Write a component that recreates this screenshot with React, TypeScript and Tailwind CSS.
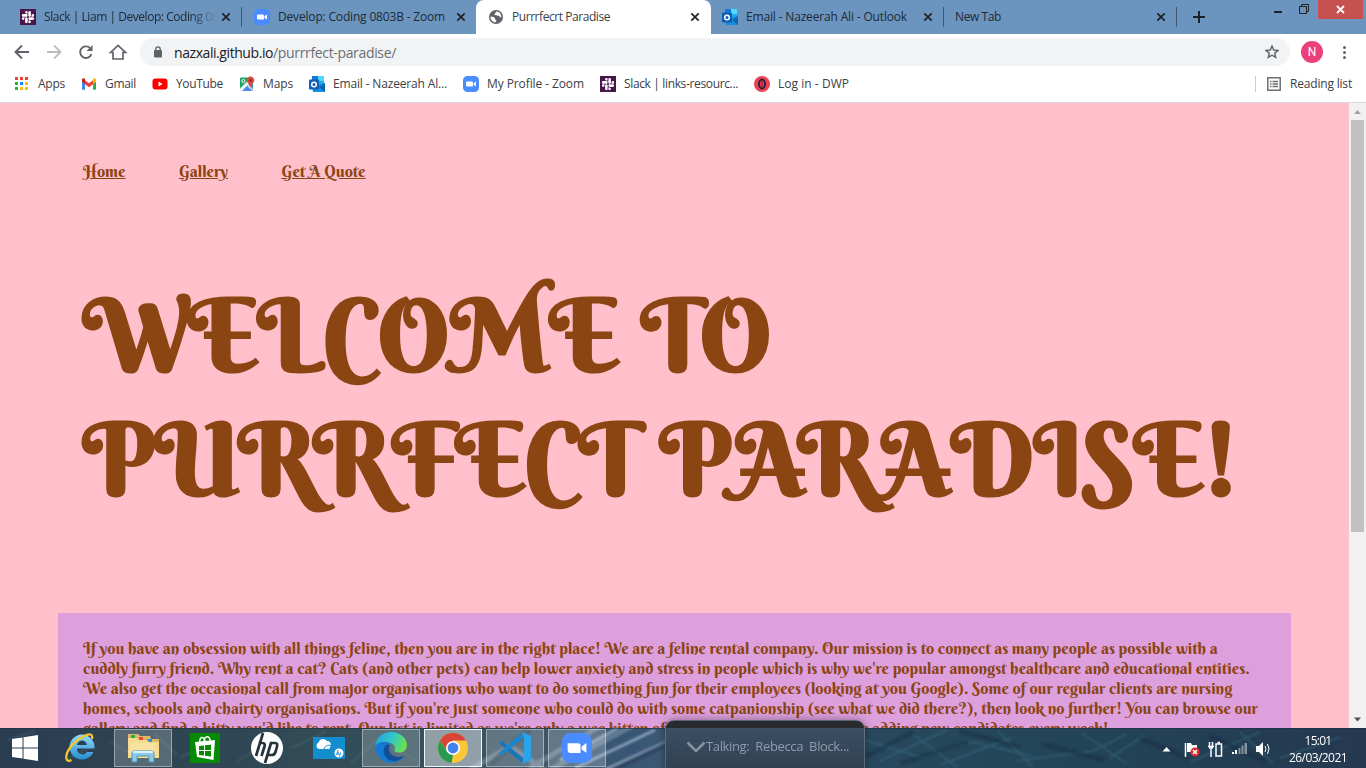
import { useLayoutEffect, useRef } from "react";
import type { ReactNode } from "react";
import { FaSlack } from "react-icons/fa";

/* Text tracked to an exact measure. */
function Fit({ w, children, className = "" }: { w: number; children: string; className?: string }) {
  const ref = useRef<HTMLSpanElement>(null);
  useLayoutEffect(() => {
    const el = ref.current;
    if (!el) return;
    el.style.letterSpacing = "0px";
    const natural = el.getBoundingClientRect().width;
    el.style.letterSpacing = `${(w - natural) / children.length}px`;
  }, [w, children]);
  return (
    <span className={`block shrink-0 whitespace-pre ${className}`} style={{ width: w }}>
      <span ref={ref} className="inline-block">{children}</span>
    </span>
  );
}

const Slack = () => (
  <div className="flex size-4 shrink-0 items-center justify-center bg-[#4a154b] text-white"><FaSlack size={14} /></div>
);
const Zoom = ({ size = 16 }: { size?: number }) => (
  <svg width={size} height={size} viewBox="0 0 16 16" className="shrink-0">
    <rect width="16" height="16" rx="4.500" fill="#4a8cff" />
    <path d="M3 5.400h5.600q1.300 0 1.300 1.300v3.900H4.300Q3 10.600 3 9.300ZM10.500 7.200l2.500-1.800v5.200l-2.500-1.800Z" fill="#fff" />
  </svg>
);
const Outlook = () => (
  <svg width="16" height="16" viewBox="0 0 16 16" className="shrink-0">
    <path d="M3 0h7v6H3z" fill="#0f78d4" />
    <path d="M9 0h6v5H9z" fill="#50d9ff" />
    <path d="M3 5h7v5H3z" fill="#0364b8" />
    <path d="M9 5h6v4H9z" fill="#28a8ea" />
    <path d="M3 10l13-3v9H4z" fill="#1490df" />
    <path d="M16 7v9l-6-5z" fill="#1066b5" />
    <rect y="3.500" width="10" height="10" rx="1" fill="#0f5fb5" />
    <circle cx="5" cy="8.500" r="2.300" fill="none" stroke="#fff" strokeWidth="1.500" />
  </svg>
);
const Globe = () => (
  <svg width="14" height="14" viewBox="0 0 14 14" className="shrink-0">
    <circle cx="7" cy="7" r="7" fill="#5f6368" />
    <path d="M7.500 1.500c-1 .4-.4 1.500-1.500 2s-.5 1.800.8 1.700 1.700.7 2.700.5S11 8 12.300 7.300C12.500 3.800 10 1.600 7.500 1.500ZM1.500 6.500c2 .2 4.300.4 4.500 2.200s1.500.8 1.400 2.100c0 .8-1 .8-1.200 1.600C3.500 12 1.400 9.500 1.500 6.500Z" fill="#fff" />
  </svg>
);
const Cross = () => (
  <svg width="10" height="10" viewBox="0 0 10 10" className="shrink-0">
    <path d="M1.300 1.300l7.400 7.400M8.700 1.300L1.300 8.700" stroke="#202124" strokeWidth="1.700" />
  </svg>
);

function Tab({ icon, label, w, sep, fade }: { icon?: ReactNode; label: string; w: number; sep?: boolean; fade?: boolean }) {
  return (
    <div className="flex h-full w-[233px] shrink-0 items-center pl-[11px]">
      {icon && <div className="mr-2 flex">{icon}</div>}
      <div className={fade ? "[mask-image:linear-gradient(to_right,black_148px,transparent_172px)]" : ""}>
        <Fit w={w}>{label}</Fit>
      </div>
      <div className={`ml-auto flex ${sep ? "mr-[10px]" : "mr-[9px]"}`}><Cross /></div>
      <div className={`h-5 w-px ${sep ? "bg-[#415a73]" : "bg-transparent"}`} />
    </div>
  );
}

function Bookmark({ icon, label, w }: { icon: ReactNode; label: string; w: number }) {
  return (
    <div className="flex shrink-0 items-center gap-2">
      <div className="flex w-4 justify-center">{icon}</div>
      <Fit w={w}>{label}</Fit>
    </div>
  );
}

const appColors = ["#ea4335", "#ea4335", "#ea4335", "#34a853", "#1a86f0", "#fbbc05", "#34a853", "#fbbc05", "#fbbc05"];
const Apps = () => (
  <div className="mr-px grid grid-cols-3 gap-[2px]">
    {appColors.map((c, i) => <div key={i} className="h-[3px] w-[3px]" style={{ background: c }} />)}
  </div>
);
const Gmail = () => (
  <svg width="16" height="12" viewBox="0 0 16 12">
    <path d="M1 1.500V11a.8.8 0 0 0 .8.800H4V4z" fill="#4285f4" />
    <path d="M15 1.500V11a.8.8 0 0 1-.8.800H12V4z" fill="#34a853" />
    <path d="M4 2.300l4 3 4-3v3.900l-4 3-4-3z" fill="#ea4335" />
    <path d="M1 3.800V2C1 .3 2.700-.2 4 .8v5.300z" fill="#c5221f" />
    <path d="M15 3.800V2c0-1.700-1.700-2.200-3-1.200v5.300z" fill="#fbbc04" />
  </svg>
);
const YouTube = () => (
  <svg width="16" height="12" viewBox="0 0 16 12"><rect x=".5" y=".5" width="15" height="11" rx="3" fill="#f00" /><path d="M6.500 3.500v5l4-2.500z" fill="#fff" /></svg>
);
const Maps = () => (
  <svg width="16" height="16" viewBox="0 0 16 16">
    <rect x="1" y="1.500" width="13" height="13.500" rx="1" fill="#1fa463" />
    <path d="M1 15L13 3l1 12z" fill="#4a89f3" />
    <path d="M1 12.500L11 2.500l2 2L3 15H1z" fill="#f5f5f5" />
    <path d="M9 8l5.500 6-1 1L8 10z" fill="#d8d8d8" />
    <circle cx="4.300" cy="5" r="1.500" fill="none" stroke="#fff" strokeWidth=".9" />
    <path d="M11.500 .5A3.900 3.900 0 0 1 15.300 4.600C15.300 7 12.300 8 11.500 11.500 10.800 8 7.700 7 7.700 4.600A3.900 3.900 0 0 1 11.500 .5Z" fill="#dd4b3e" />
    <circle cx="11.500" cy="4.400" r="1.300" fill="#822f2b" />
  </svg>
);
const Dwp = () => (
  <svg width="16" height="16" viewBox="0 0 16 16"><circle cx="8" cy="8" r="8" fill="#f0414f" /><ellipse cx="8" cy="8" rx="3" ry="4.400" fill="none" stroke="#2b2344" strokeWidth="2" /><path d="M8 5v6" stroke="#8d2345" strokeWidth="1.200" /></svg>
);

function Task({ children, state = "idle" }: { children?: ReactNode; state?: "idle" | "open" | "active" }) {
  const look = state === "active" ? "border-white/90 bg-white/45" : state === "open" ? "border-white/40 bg-white/20" : "border-transparent";
  return <div className={`flex h-[38px] w-[58px] shrink-0 items-center justify-center border ${look}`}>{children}</div>;
}

const Wallpaper = () => (
  <svg className="absolute inset-0" width="1366" height="40" viewBox="0 0 1366 40">
    <defs>
      <linearGradient id="bar" x2="1" y2="0">
        <stop offset="0" stopColor="#2b3d51" /><stop offset=".2" stopColor="#304955" /><stop offset=".3" stopColor="#34505b" />
        <stop offset=".4" stopColor="#3d566b" /><stop offset=".46" stopColor="#385674" /><stop offset=".5" stopColor="#3d5a75" />
        <stop offset=".64" stopColor="#28495d" /><stop offset=".8" stopColor="#234457" /><stop offset="1" stopColor="#25384f" />
      </linearGradient>
      <filter id="soft"><feGaussianBlur stdDeviation="1.300" /></filter>
    </defs>
    <rect width="1366" height="40" fill="url(#bar)" />
    <g filter="url(#soft)" fill="none">
      <path d="M470 42l40-24 35 24M530 40l70-42M546 44l86-46" stroke="#8194a8" strokeWidth="5" opacity=".6" />
      <path d="M575 40l80-38M600 44l70-32M560 32l58-32" stroke="#b4c8dc" strokeWidth="3" opacity=".65" />
      <path d="M490 36l40-35M612 42l56-27" stroke="#1d344c" strokeWidth="5" opacity=".5" />
      <path d="M180 30l30-16M236 34l40-24M292 20l34-17M350 36l28-25M382 12l36 22M68 31l25-13M110 14l30 17M155 6l22 21M8 12l27-9" stroke="#658085" strokeWidth="2" opacity=".28" />
      <path d="M865 12l58 18 50-16 58 14M880 33l67-31M914 7l44 33M940 37l71-27M998 3l35 36M1016 33l77-10 34-17M1082 5l45 31M1110 30l35-23M1190 34l70-30M1240 4l33 31M1280 30l61-21" stroke="#468096" strokeWidth="1.500" opacity=".42" />
      <path d="M867 28l46-24M901 35l67-20M960 3l60 16M1042 16l63 16M1140 10l48 20M1210 8l55 25" stroke="#132e42" strokeWidth="4" opacity=".5" />
    </g>
    <path d="M0 .5h1366" stroke="#1e3040" opacity=".6" />
  </svg>
);

const bodyLines = [
  "If you have an obsession with all things feline, then you are in the right place! We are a feline rental company. Our mission is to connect as many people as possible with a",
  "cuddly furry friend. Why rent a cat? Cats (and other pets) can help lower anxiety and stress in people which is why we're popular amongst healthcare and educational entities.",
  "We also get the occasional call from major organisations who want to do something fun for their employees (looking at you Google). Some of our regular clients are nursing",
  "homes, schools and chairty organisations. But if you're just someone who could do with some catpanionship (see what we did there?), then look no further! You can browse our",
];

export default function App() {
  return (
    <div className="relative flex h-[768px] w-[1366px] flex-col overflow-hidden bg-white font-['Open_Sans',sans-serif] text-[12px] text-[#3c4043]">
      {/* Tab strip */}
      <div className="flex h-[34px] shrink-0 bg-[#6b95bf] text-[#202a35]">
        <div className="flex w-[243px] shrink-0 pl-[9px]"><Tab icon={<Slack />} label="Slack | Liam | Develop: Coding 08" w={174} sep fade /></div>
        <Tab icon={<Zoom />} label="Develop: Coding 0803B - Zoom" w={167} />
        <div className="flex w-[235px] shrink-0 items-center rounded-t-lg bg-white pr-[11px] pl-[13px] text-[#3c4043]">
          <Globe />
          <div className="ml-[9px]"><Fit w={98}>Purrrfecrt Paradise</Fit></div>
          <div className="ml-auto flex"><Cross /></div>
        </div>
        <Tab icon={<Outlook />} label="Email - Nazeerah Ali - Outlook" w={161} sep />
        <Tab label="New Tab" w={46} sep />
        <svg width="189" height="34" viewBox="1177 0 189 34" className="shrink-0">
          <path d="M1193 17h12M1199 11v12" stroke="#202124" strokeWidth="2" />
          <path d="M1274 12h8" stroke="#202124" strokeWidth="2" />
          <path d="M1299.500 6.500h7v7h-7zM1301.500 6V4.500h7v7h-2" fill="none" stroke="#202124" />
          <path d="M1318 0h45v19h-45z" fill="#c75050" />
          <path d="M1337 6l7 7M1344 6l-7 7" stroke="#fff" strokeWidth="1.800" />
        </svg>
      </div>

      {/* Toolbar */}
      <div className="flex h-[36px] shrink-0 items-center">
        <svg width="140" height="36" viewBox="0 34 140 36" fill="none" strokeWidth="1.900" className="shrink-0">
          <path d="M29 52H16M22 45.500L15.500 52l6.500 6.500" stroke="#5f6368" />
          <path d="M47 52h13M54 45.500l6.500 6.500-6.500 6.500" stroke="#bbbdc0" />
          <path d="M91.400 54.200a5.800 5.800 0 1 1-1.500-6.300" stroke="#5f6368" />
          <path d="M92.500 45v6h-6z" fill="#5f6368" />
          <path d="M110.500 52.500L118 45.500l7.500 7H123V59h-10v-6.500z" stroke="#5f6368" strokeWidth="1.700" />
        </svg>
        <div className="flex h-7 w-[1150px] shrink-0 items-center rounded-full bg-[#f1f3f4] pr-[11px] pl-[13px] text-[14px]">
          <svg width="10" height="12" viewBox="0 0 10 12" className="mr-[11px]"><rect x="1" y="4" width="8" height="7.500" rx="1" fill="#5f6368" /><path d="M2.800 5V3a2.200 2.200 0 0 1 4.400 0v2" fill="none" stroke="#5f6368" strokeWidth="1.300" /></svg>
          <Fit w={99} className="text-[#202124]">nazxali.github.io</Fit>
          <Fit w={123} className="text-[#6b6f74]">/purrrfect-paradise/</Fit>
          <svg width="14" height="14" viewBox="0 0 14 14" className="ml-auto"><path d="M7 1l1.700 4 4.300.4-3.300 2.800 1 4.200L7 10.200l-3.700 2.200 1-4.200L1 5.400l4.300-.4z" fill="none" stroke="#5f6368" strokeWidth="1.400" /></svg>
        </div>
        <div className="ml-[11px] flex size-[22px] items-center justify-center rounded-full bg-[#ec407a] font-['Roboto'] text-[12px] text-white">N</div>
        <div className="ml-5 flex flex-col gap-[2px]">
          {[0, 1, 2].map((i) => <div key={i} className="size-[3px] rounded-full bg-[#5f6368]" />)}
        </div>
      </div>

      {/* Bookmarks */}
      <div className="flex h-[33px] shrink-0 items-center gap-4 border-b border-[#d5d8dc] pr-[14px] pb-[5px] pl-[14px]">
        <Bookmark icon={<Apps />} label="Apps" w={27} />
        <Bookmark icon={<Gmail />} label="Gmail" w={31} />
        <Bookmark icon={<YouTube />} label="YouTube" w={47} />
        <Bookmark icon={<Maps />} label="Maps" w={30} />
        <Bookmark icon={<Outlook />} label="Email - Nazeerah Al..." w={114} />
        <Bookmark icon={<Zoom />} label="My Profile - Zoom" w={97} />
        <Bookmark icon={<Slack />} label="Slack | links-resourc..." w={114} />
        <Bookmark icon={<Dwp />} label="Log in - DWP" w={71} />
        <div className="ml-auto flex items-center">
          <div className="mr-[11px] h-4 w-px bg-[#ccc]" />
          <svg width="14" height="14" viewBox="0 0 14 14" className="mr-[9px]"><rect x=".8" y=".8" width="12.400" height="12.400" fill="none" stroke="#6b6e72" strokeWidth="1.500" /><path d="M3 4.500h1.500M3 7h1.500M3 9.500h1.500M5.500 4.500H11M5.500 7H11M5.500 9.500H11" stroke="#6b6e72" strokeWidth="1.400" /></svg>
          <Fit w={62}>Reading list</Fit>
        </div>
      </div>

      {/* Page */}
      <div className="flex h-[625px] shrink-0 bg-[#ffc0cb] font-['Berkshire_Swash','Liberation_Serif',serif] text-[#8b4513]">
        <div className="h-full w-[1349px] overflow-hidden">
          <nav className="flex gap-[53.600px] pt-[57px] pl-[83px] text-[16px] leading-[22px] underline">
            <a>Home</a>
            <a>Gallery</a>
            <a>Get A Quote</a>
          </nav>
          <h1 className="mt-[91px] pl-[83px] text-[100px] leading-[124px] font-bold whitespace-nowrap">
            WELCOME TO<br />PURRFECT PARADISE!
          </h1>
          <div className="mt-[92px] ml-[58px] h-[200px] w-[1233px] bg-[#dda0dd] pt-[25px] pl-[25px] text-[16px] leading-5 whitespace-nowrap">
            {bodyLines.map((t) => <div key={t}>{t}</div>)}
            <div className="flex">
              <div className="w-[778px]">gallery and find a kitty you'd like to rent. Our list is limited as we're only a wee kitten of</div>
              <div>e adding new candidates every week!</div>
            </div>
          </div>
        </div>
        <div className="flex h-full w-[17px] flex-col items-center bg-[#f1f1f1]">
          <svg width="17" height="17" viewBox="0 0 17 17" className="shrink-0"><path d="M5 11l3.500-4 3.500 4z" fill="#a3a3a3" /></svg>
          <div className="h-[412px] w-[13px] bg-[#c1c1c1]" />
          <svg width="17" height="17" viewBox="0 0 17 17" className="mt-auto"><path d="M5 6.500h7l-3.500 4z" fill="#505050" /></svg>
        </div>
      </div>

      {/* Taskbar */}
      <div className="relative h-10 shrink-0">
        <Wallpaper />
        <div className="relative flex h-full items-center gap-1">
          <div className="flex w-12 shrink-0 pl-3">
            <svg width="26" height="26" viewBox="0 0 26 26" fill="#fff"><path d="M0 4l10.500-1.500v10H0zM11.500 2.300L26 0v12.500H11.500zM0 13.500h10.500v10L0 22zM11.500 13.500H26V26l-14.500-2.300z" /></svg>
          </div>
          <Task>
            <svg width="32" height="32" viewBox="0 0 32 32">
              <defs><linearGradient id="ie" x2="0" y2="1"><stop stopColor="#91dcfa" /><stop offset="1" stopColor="#258ed0" /></linearGradient></defs>
              <path d="M28.500 20a12.500 12.500 0 1 1 1-5.500v2H12a5.500 5.500 0 0 0 10 3.500zM12 13h10c-1-6-9-6-10 0z" fill="url(#ie)" fillRule="evenodd" />
              <path d="M27 7c1-5-2-6-8-3C11 8 3 16 1.500 23c-1 5 1 7 5 5" fill="none" stroke="#f6c52f" strokeWidth="2.300" />
            </svg>
          </Task>
          <Task state="open">
            <svg width="34" height="32" viewBox="0 0 34 32">
              <path d="M2 2h10l2 2h10l1 3h8v19H2z" fill="#dfb964" />
              <path d="M5 3h4v3H5z" fill="#20b04c" /><path d="M13 5h4v3h-4z" fill="#e34b3b" /><path d="M21 7h5v3h-5z" fill="#2b93dc" />
              <path d="M2 6h9l2 2h8l2 2h10v16H2z" fill="#f7dc8d" />
              <path d="M4 11h25v12H4z" fill="#fae8b1" opacity=".6" />
              <path d="M6 30V21q0-2 2-2h18q2 0 2 2v9h-5v-6H11v6z" fill="#8bcbe8" stroke="#4994bc" />
              <path d="M7 20h20" stroke="#d6f2ff" strokeWidth="2" />
            </svg>
          </Task>
          <Task>
            <svg width="30" height="30" viewBox="0 0 30 30"><path d="M0 0h30v30H0z" fill="#058a05" /><path d="M5 9l20-2-1.500 20L7 24z" fill="#fff" /><path d="M10 10c-1-7 4-7 5-2M14 9c0-7 7-7 6 0" fill="none" stroke="#fff" strokeWidth="1.500" /><path d="M9 13l5-.5v4.500H9zM15 12.300l6-.6V17h-6zM9 18h5v4.500L9 22zM15 18h6v5.500l-6-.8z" fill="#058a05" /></svg>
          </Task>
          <Task>
            <svg width="32" height="32" viewBox="0 0 32 32"><circle cx="16" cy="16" r="16" fill="#fff" /><path d="M12 1L5 24M7.500 11h4q3 0 2 3.500L10.500 24M20 11l-6 20M19 11h5q3 0 2 3.500l-1.500 5.500q-1 3-3.500 3h-4" fill="none" stroke="#26323c" strokeWidth="2.700" /></svg>
          </Task>
          <Task>
            <svg width="32" height="22" viewBox="0 0 32 22"><path d="M0 0h32v22H0z" fill="#148dcc" /><path d="M6 12a3.500 3.500 0 0 1-.5-6.500C7 1 12 1 14 4c4-1 5 5 2 8z" fill="#fff" /><path d="M11 12c1-3 4-5 7-3" stroke="#148dcc" fill="none" /><circle cx="26" cy="16" r="4.500" fill="#fff" /><path d="M25 13l-1.500 5M24.500 15.500h1L25 18M27.500 15.500l-1 4" stroke="#148dcc" fill="none" /></svg>
          </Task>
          <Task state="open">
            <svg width="32" height="32" viewBox="0 0 32 32">
              <defs><linearGradient id="edge" x2="1" y2=".3"><stop stopColor="#219fe0" /><stop offset=".6" stopColor="#32c8c6" /><stop offset="1" stopColor="#65df58" /></linearGradient></defs>
              <path d="M0 15C1 5 8 0 16 0c9 0 16 6 16 13 0 6-5 9-11 7-3-1-1-2-1-4 0-4-5-6-9-5C6 11 2 12 0 15Z" fill="url(#edge)" />
              <path d="M0 15c3-6 10-6 15-4-5 2-6 8-2 13 3 4 9 3 15 1C22 34 3 34 0 15Z" fill="#1479d2" />
              <path d="M10 14c-4 7 2 16 10 15 4-1 7-2 9-5-5 2-10 1-13-2-2-3-3-5-1-9-2-1-4 0-5 1Z" fill="#124f99" />
            </svg>
          </Task>
          <Task state="active">
            <svg width="30" height="30" viewBox="0 0 30 30">
              <circle cx="15" cy="15" r="15" fill="#fbc739" /><path d="M2 7.500A15 15 0 0 1 28 7.500H15L9 18z" fill="#da4437" /><path d="M2 7.500L9 18.500 15 22 13.500 30A15 15 0 0 1 2 7.500Z" fill="#279b50" /><circle cx="15" cy="15" r="7" fill="#fff" /><circle cx="15" cy="15" r="5.400" fill="#4382ed" />
            </svg>
          </Task>
          <Task state="open">
            <svg width="32" height="32" viewBox="0 0 32 32"><path d="M0 11l3-2 21 17-1 5z" fill="#1476bb" /><path d="M0 21l3 2L24 6l-1-5z" fill="#1687d0" /><path d="M23 0l9 4v24l-9 4 2-6V6z" fill="#29a3eb" /></svg>
          </Task>
          <Task state="open"><Zoom size={30} /></Task>
          <div className="ml-auto flex h-full shrink-0 items-center text-white">
            <svg width="120" height="40" viewBox="1160 728 120 40">
              <path d="M1162.500 751.500l4-4.500 4 4.500z" fill="#fff" />
              <path d="M1185.500 743v14" stroke="#fff" strokeWidth="1.500" /><path d="M1187 743h4l1 2h5v7h-10z" fill="#fff" />
              <circle cx="1195" cy="752" r="4.500" fill="#d92b29" /><path d="M1193 750l4 4M1197 750l-4 4" stroke="#fff" strokeWidth="1.500" />
              <path d="M1216 744h5.500v12H1216zM1217.500 742.500h2.500M1209.500 742v4M1212.500 742v4M1208 746.500h6M1209 748h4M1211 749v8" stroke="#fff" strokeWidth="1.500" fill="none" />
              <path d="M1232 752h2v2h-2zM1235 750h2v4h-2z" fill="#fff" /><path d="M1238.500 748h2v6h-2zM1241.500 745.500h2v8.500h-2zM1244.500 743h2.500v11h-2.500z" fill="#82949d" />
              <path d="M1256 746h3l4-4v14l-4-4h-3z" fill="#fff" /><path d="M1265 746q2 3 0 6M1267.500 744q3 5 0 10" fill="none" stroke="#fff" />
            </svg>
            <div className="flex w-[86px] flex-col items-center pr-[10px] pt-[2px] text-[12px] leading-[17px]">
              <Fit w={27}>15:01</Fit><Fit w={58}>26/03/2021</Fit>
            </div>
          </div>
        </div>
      </div>

      {/* Meeting overlay */}
      <div className="absolute top-[720px] left-[665px] flex h-[50px] w-[200px] items-center rounded-t-[9px] border border-white/20 bg-[linear-gradient(to_bottom,#292a2d_7px,#3c4e62_7px,#304153_100%)] pt-1 pl-5 text-[13px] text-[#8d9daf] shadow-[0_0_8px_#0006]">
        <svg width="20" height="12" viewBox="0 0 20 12" className="shrink-0"><path d="M1.500 1.500L10 10l8.500-8.500" fill="none" stroke="#8493a3" strokeWidth="2.500" /></svg>
        <Fit w={143}>Talking:  Rebecca  Block...</Fit>
      </div>
    </div>
  );
}
